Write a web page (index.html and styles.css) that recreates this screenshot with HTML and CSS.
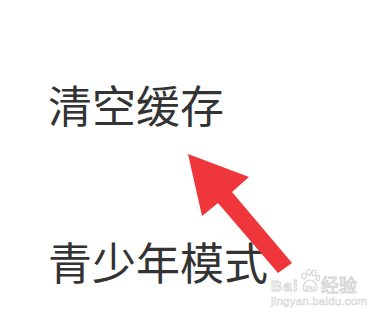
FILE: index.html
```html
<!DOCTYPE html>
<html>
<head>
<meta charset="utf-8">
<link rel="stylesheet" href="styles.css">
</head>
<body>
<div class="page">
  <div class="item item-first">清空缓存</div>
  <div class="item item-second">青少年模式</div>
  <svg class="arrow" width="388" height="320" viewBox="0 0 388 320">
    <polygon fill="#ee363b" points="188,154 249,177 232,192 292,263 278,273 218,203 202,216"/>
  </svg>
  <div class="watermark">
    <div class="wm-row">
      <span class="wm-bai">Bai</span>
      <svg class="wm-paw" width="20" height="24" viewBox="0 0 20 24">
        <g fill="none" stroke="#d6d6d6" stroke-width="1.2">
          <ellipse cx="4" cy="7" rx="2.2" ry="3"/>
          <ellipse cx="9" cy="3.5" rx="2.2" ry="3"/>
          <ellipse cx="14" cy="4" rx="2.2" ry="3"/>
          <ellipse cx="18" cy="9" rx="1.8" ry="2.6"/>
          <path d="M3 20 C3 14 7 11 10 11 C13 11 17 14 17 20 C17 23 3 23 3 20 Z"/>
        </g>
        <text x="10" y="21" font-size="8" text-anchor="middle" fill="#d6d6d6" font-family="Liberation Sans, sans-serif" font-weight="bold">du</text>
      </svg>
      <span class="wm-jy">经验</span>
    </div>
    <div class="wm-url">jingyan.baidu.com</div>
  </div>
</div>
</body>
</html>
```

FILE: styles.css
```css
html, body {
  margin: 0;
  padding: 0;
  background: #ffffff;
}
.page {
  position: relative;
  width: 388px;
  height: 320px;
  overflow: hidden;
  display: flex;
  flex-direction: column;
  padding-left: 48px;
  box-sizing: border-box;
}
.item {
  font-family: "Noto Sans CJK SC", "Noto Sans", sans-serif;
  font-size: 44px;
  line-height: 44px;
  color: #333333;
  white-space: nowrap;
}
.item-first {
  margin-top: 82px;
}
.item-second {
  margin-top: 113px;
}
.arrow {
  position: absolute;
  left: 0;
  top: 0;
}
.watermark {
  position: absolute;
  left: 271px;
  top: 266px;
  display: flex;
  flex-direction: column;
  align-items: flex-start;
  color: #d9d9d9;
}
.wm-row {
  display: flex;
  align-items: flex-end;
  height: 27px;
}
.wm-bai {
  font-family: "Liberation Sans", sans-serif;
  font-size: 15px;
  line-height: 15px;
  font-weight: bold;
  color: #ffffff;
  -webkit-text-stroke: 1px #d6d6d6;
  letter-spacing: 1.5px;
}
.wm-paw {
  margin-left: 1px;
}
.wm-jy {
  font-family: "Noto Sans CJK SC", sans-serif;
  font-size: 18px;
  line-height: 17px;
  color: #ffffff;
  -webkit-text-stroke: 1px #d6d6d6;
  margin-left: 1px;
}
.wm-url {
  font-family: "Liberation Sans", sans-serif;
  font-size: 11.5px;
  line-height: 11px;
  margin-top: 3px;
  color: #ffffff;
  -webkit-text-stroke: 0.6px #d6d6d6;
  letter-spacing: 0.2px;
}
```
